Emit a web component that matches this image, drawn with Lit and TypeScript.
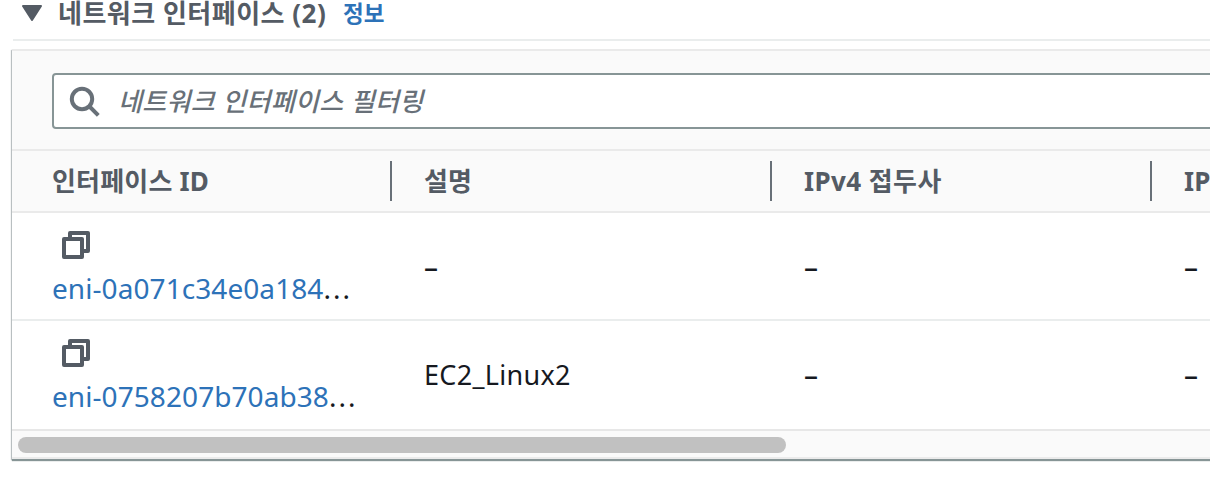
import { LitElement, html, css } from "lit";
import { customElement } from "lit/decorators.js";

const copyIcon = html`<svg class="copy" width="28" height="28" viewBox="0 0 28 28" fill="none" stroke="#545b64" stroke-width="4" stroke-linejoin="round">
  <path d="M8 8V2H26V20H20" />
  <path d="M2 8H20V26H2Z" />
</svg>`;

interface Row { id: string; desc: string; }

const rows: Row[] = [
  { id: "eni-0a071c34e0a184", desc: "–" },
  { id: "eni-0758207b70ab38", desc: "EC2_Linux2" },
];

@customElement("app-root")
export class AppRoot extends LitElement {
  static styles = css`
    :host { display: block; width: 100vw; height: 488px; overflow: hidden; background: #fff;
      font-family: "Noto Sans", "Noto Sans CJK KR", sans-serif; color: #16191f; }
    * { box-sizing: border-box; }
    .title { display: flex; height: 41px; margin-left: 13px; padding-left: 9px; border-bottom: 2px solid #eaeded;
      color: #545b64; white-space: nowrap; }
    .caret { display: block; margin: 5px 16px 0 0; flex: none; }
    h2 { margin: 0; width: 285px; flex: none; font-size: 26px; line-height: 26px; font-weight: 700; letter-spacing: 0.5px; }
    .info { color: #2d72b8; font-size: 22.5px; line-height: 28px; font-weight: 700; }
    .panel { margin: 8px 0 0 12px; width: 1300px; height: 410px; border-top: 2px solid #eaeaea;
      border-bottom: 2px solid #ebebeb; background: #fafafa;
      box-shadow: 0 2px 1px 0 #879596, -1px 1px 1px 0 #c3c8cb; }
    .tools { height: 100px; padding: 22px 0 0 40px; border-bottom: 2px solid #eaeaea; }
    .search { height: 56px; border: 2px solid #879596; border-radius: 4px; background: #fff;
      display: flex; padding-left: 16px; color: #687078; white-space: nowrap; }
    .search svg { display: block; margin: 11px 17px 0 -1px; flex: none; }
    .hint { font-size: 26px; line-height: 52px; font-style: italic; font-weight: 500; letter-spacing: 0.35px; }
    .grid { display: grid; grid-template-columns: 380px 380px 380px 160px; }
    .head { height: 62px; border-bottom: 2px solid #eaeaea; color: #545b64; font-size: 26px; font-weight: 700;
      line-height: 40px; padding-top: 10px; white-space: nowrap; letter-spacing: 0.2px; }
    .head > div { height: 40px; padding-left: 32px; border-right: 2px solid #687078; }
    .head > div:first-child { padding-left: 40px; }
    .head > div:nth-child(3) { letter-spacing: 0.4px; }
    .row { height: 108px; background: #fff; border-bottom: 2px solid #eaeded; font-size: 27px; line-height: 40px; }
    .row + .row { height: 110px; border-color: #e7e7e7; }
    .cell { padding: 34px 0 0 32px; letter-spacing: 0.3px; }
    .dash { font-weight: 500; font-size: 28px; }
    .idcell { padding: 18px 0 0 40px; white-space: nowrap; }
    .copy { display: block; margin-left: 10px; }
    .id { margin-top: 9px; font-size: 28px; letter-spacing: 0.07px; }
    .link { color: #2d72b8; }
    .more { letter-spacing: 2px; }
    .track { height: 26px; padding: 6px; }
    .thumb { width: 768px; height: 16px; border-radius: 8px; background: #c1c1c1; }
  `;

  cell(text: string) {
    return html`<div class="cell ${text === "–" ? "dash" : ""}">${text}</div>`;
  }

  render() {
    return html`
      <div class="title">
        <svg class="caret" width="20" height="16" viewBox="0 0 20 16"><path d="M1 1H19L10 15Z" fill="#545b64" stroke="#545b64" stroke-width="2" stroke-linejoin="round" /></svg>
        <h2>네트워크 인터페이스 (2)</h2>
        <div class="info">정보</div>
      </div>
      <div class="panel">
        <div class="tools">
          <div class="search">
            <svg width="32" height="32" viewBox="0 0 32 32" fill="none" stroke="#687078" stroke-width="4"><circle cx="13" cy="13" r="10.2" /><path d="M20 20L29.3 29.3" /></svg>
            <div class="hint">네트워크 인터페이스 필터링</div>
          </div>
        </div>
        <div class="grid head">
          <div>인터페이스 ID</div><div>설명</div><div>IPv4 접두사</div><div>IPv6 접두사</div>
        </div>
        ${rows.map((r) => html`<div class="grid row">
          <div class="idcell">${copyIcon}<div class="id"><span class="link">${r.id}</span><span class="more">...</span></div></div>
          ${this.cell(r.desc)}${this.cell("–")}${this.cell("–")}
        </div>`)}
        <div class="track"><div class="thumb"></div></div>
      </div>`;
  }
}
